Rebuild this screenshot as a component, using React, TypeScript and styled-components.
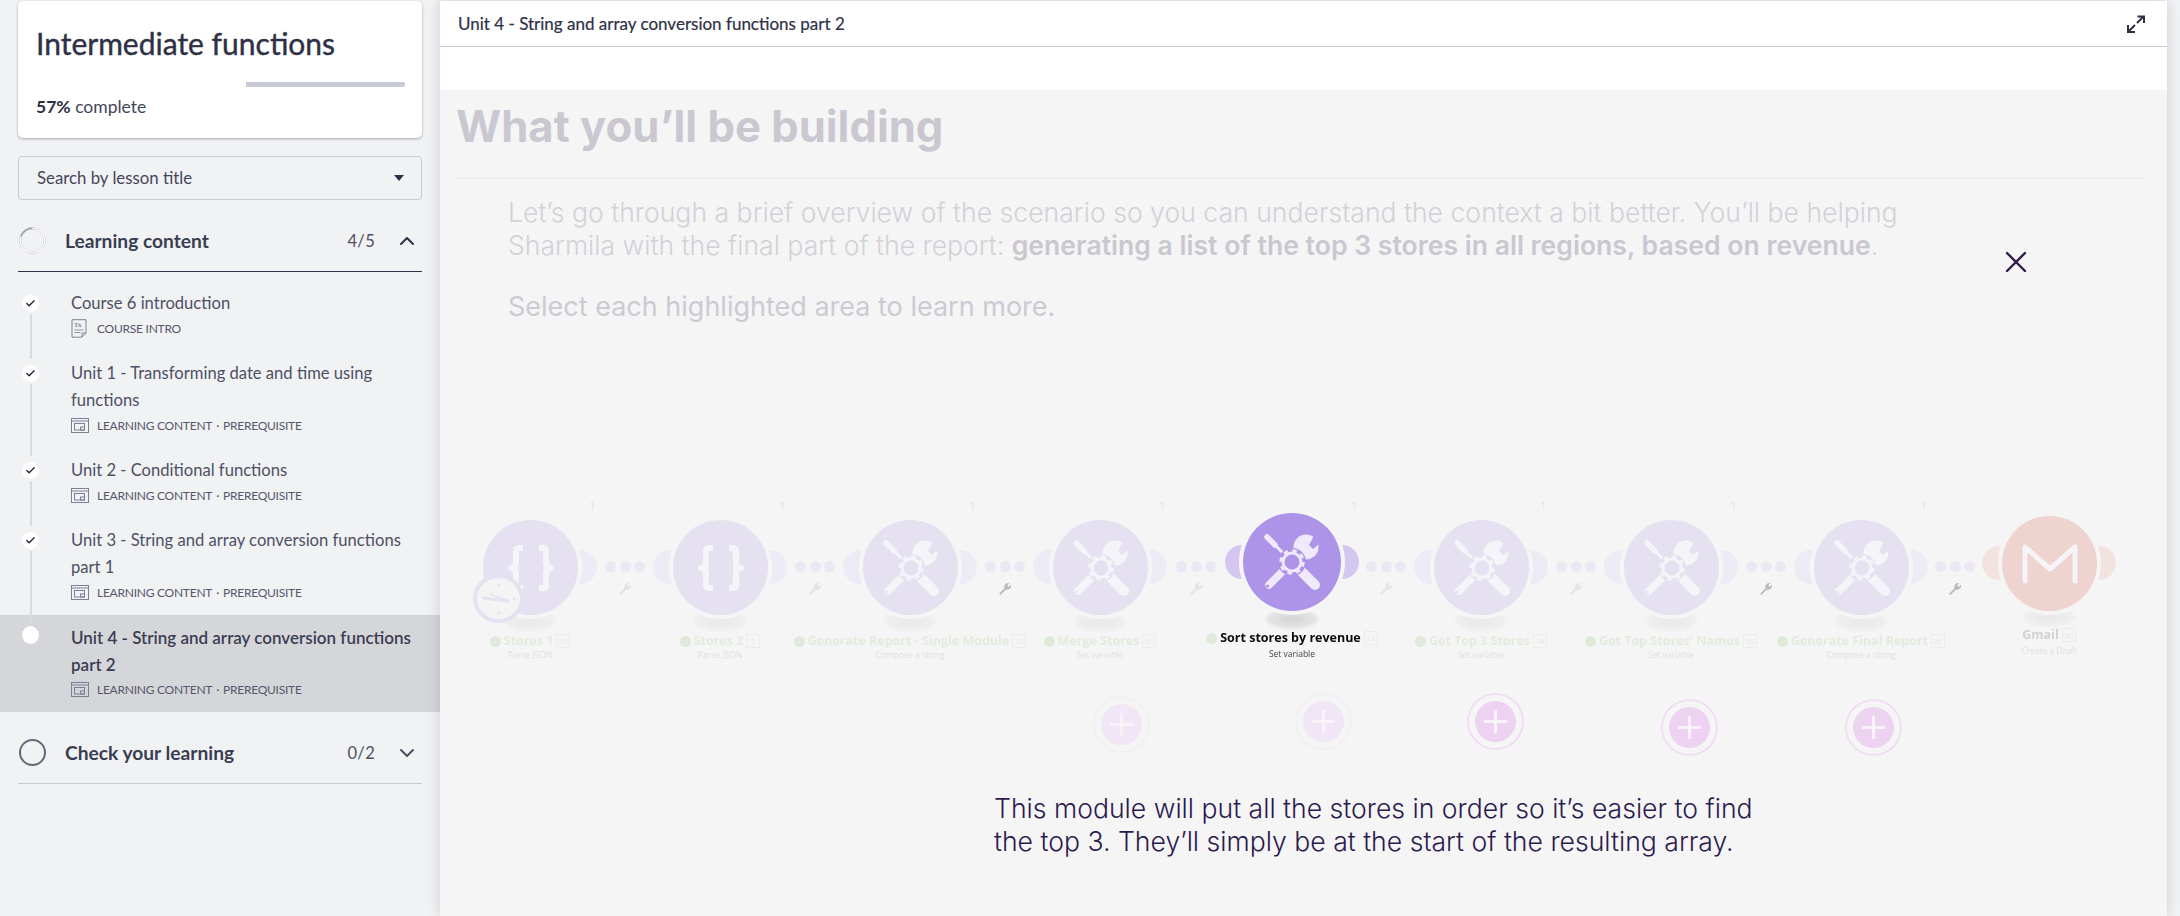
import React from 'react';
import styled, { createGlobalStyle } from 'styled-components';
import { Check, ChevronDown, ChevronUp, X } from 'lucide-react';

const sidebarFont = `Lato, "Noto Sans", sans-serif`;
const bodyFont = `Inter, "Noto Sans", sans-serif`;

const GlobalStyle = createGlobalStyle`
  html, body {
    margin: 0;
    padding: 0;
    height: 100%;
    background: #f1f2f4;
    overflow: hidden;
  }
  * {
    box-sizing: border-box;
  }
`;

type Lesson = { title: string; kind: 'intro' | 'content'; active?: boolean };

const lessons: Lesson[] = [
  { title: 'Course 6 introduction', kind: 'intro' },
  { title: 'Unit 1 - Transforming date and time using functions', kind: 'content' },
  { title: 'Unit 2 - Conditional functions', kind: 'content' },
  { title: 'Unit 3 - String and array conversion functions part 1', kind: 'content' },
  { title: 'Unit 4 - String and array conversion functions part 2', kind: 'content', active: true },
];

type Module = {
  x: number;
  name: string;
  badge: string;
  sub: string;
  icon: 'braces' | 'tools' | 'gmail';
  active?: boolean;
};

const modules: Module[] = [
  { x: 530, name: 'Stores 1', badge: '20', sub: 'Parse JSON', icon: 'braces' },
  { x: 720, name: 'Stores 2', badge: '1', sub: 'Parse JSON', icon: 'braces' },
  { x: 910, name: 'Generate Report - Single Module', badge: '28', sub: 'Compose a string', icon: 'tools' },
  { x: 1100, name: 'Merge Stores', badge: '31', sub: 'Set variable', icon: 'tools' },
  { x: 1292, name: 'Sort stores by revenue', badge: '13', sub: 'Set variable', icon: 'tools', active: true },
  { x: 1481, name: 'Get Top 3 Stores', badge: '34', sub: 'Set variable', icon: 'tools' },
  { x: 1671, name: "Get Top Stores' Names", badge: '35', sub: 'Set variable', icon: 'tools' },
  { x: 1861, name: 'Generate Final Report', badge: '36', sub: 'Compose a string', icon: 'tools' },
  { x: 2049, name: 'Gmail', badge: '30', sub: 'Create a Draft', icon: 'gmail' },
];

const links = [
  { x: 625, dark: false },
  { x: 815, dark: false },
  { x: 1005, dark: true },
  { x: 1196, dark: false },
  { x: 1386, dark: false },
  { x: 1576, dark: false },
  { x: 1766, dark: true },
  { x: 1955, dark: true },
];

const addButtons = [
  { x: 1121, y: 724, faint: true },
  { x: 1323, y: 721, faint: true },
  { x: 1495, y: 721, faint: false },
  { x: 1689, y: 727, faint: false },
  { x: 1873, y: 727, faint: false },
];

function ToolsIcon({ cut }: { cut: string }) {
  return (
    <svg width="60" height="60" viewBox="0 0 60 60" fill="none" stroke="currentColor" strokeLinecap="round">
      <path d="M5 5l8 8" strokeWidth="5.5" />
      <path d="M12 12l10 10" strokeWidth="3" />
      <path d="M38 38l15 15" strokeWidth="10" />
      <path d="M7 53l15-15" strokeWidth="7.5" />
      <circle cx="5.5" cy="54" r="1.6" fill={cut} stroke="none" />
      <path d="M35 25l-5 5" strokeWidth="7" />
      <circle cx="44" cy="15" r="12.5" fill="currentColor" stroke="none" />
      <path d="M47 13L53 2 62 8 51 17z" fill={cut} stroke="none" />
      <circle cx="30" cy="30" r="14" fill={cut} stroke="none" />
      <circle cx="30" cy="30" r="9" strokeWidth="3" />
      <circle cx="30" cy="30" r="11.5" strokeWidth="2.5" strokeDasharray="4.5 4.53" strokeLinecap="butt" />
    </svg>
  );
}

function BracesIcon() {
  return (
    <svg width="50" height="48" viewBox="0 0 50 48" fill="none" stroke="currentColor" strokeWidth="6" strokeLinejoin="round">
      <path d="M17 4h-4q-3 0-3 3v12q0 5-5 5 5 0 5 5v12q0 3 3 3h4" />
      <path d="M33 4h4q3 0 3 3v12q0 5 5 5-5 0-5 5v12q0 3-3 3h-4" />
    </svg>
  );
}

function GmailIcon() {
  return (
    <svg width="56" height="42" viewBox="0 0 56 42" fill="none" stroke="currentColor" strokeWidth="5" strokeLinecap="round" strokeLinejoin="round">
      <path d="M3 38V4l25 22L53 4v34" />
    </svg>
  );
}

function ClockIcon() {
  return (
    <svg width="42" height="42" viewBox="0 0 42 42" fill="none" stroke="#e5e1f1" strokeLinecap="round">
      <path d="M6 20l24 3" strokeWidth="3" />
      <path d="M12 16l18 7" strokeWidth="1.5" />
      <circle cx="21" cy="7" r="1.4" fill="#e5e1f1" stroke="none" />
      <circle cx="21" cy="35" r="1.4" fill="#e5e1f1" stroke="none" />
      <circle cx="36" cy="21" r="1.4" fill="#e5e1f1" stroke="none" />
    </svg>
  );
}

function SmallWrench() {
  return (
    <svg width="15" height="15" viewBox="0 0 16 16" fill="currentColor">
      <path d="M2.5 14.8L1.2 13.5 7 7.6C6 5 8 1.6 12 2.2L9.8 4.6l1.6 1.7 2.5-2.3C14.6 7.6 11.4 10 8.4 9z" />
    </svg>
  );
}

function DocIcon() {
  return (
    <svg width="16" height="19" viewBox="0 0 16 19" fill="none" stroke="#7d8092">
      <path d="M1 .7h14v13.5l-4 4H1z" />
      <path d="M11 18v-4h4" />
      <path d="M3.5 11h9M3.5 13.5h6" strokeWidth=".8" />
      <text x="3" y="8" fontSize="7" fontFamily="Liberation Serif, serif" fill="#4a4d63" stroke="none">Tx</text>
    </svg>
  );
}

function SlideIcon() {
  return (
    <svg width="18" height="15" viewBox="0 0 18 15" fill="none" stroke="#7d8092">
      <rect x=".5" y=".5" width="17" height="14" />
      <path d="M.5 3h17" />
      <rect x="3.5" y="5.5" width="10" height="6.5" />
      <rect x="9.5" y="9" width="4" height="3" />
    </svg>
  );
}

function ExpandIcon() {
  return (
    <svg width="18" height="18" viewBox="0 0 18 18" fill="none" stroke="#2e3146" strokeWidth="2">
      <path d="M10 8l6.5-6.5M10.5 1.5h6.5v6.5" />
      <path d="M8 10l-6.5 6.5M1 10v7h7" />
    </svg>
  );
}

function App() {
  return (
    <Page>
      <GlobalStyle />
      <Sidebar>
        <CourseCard>
          <CourseTitle>Intermediate functions</CourseTitle>
          <ProgressTrack>
            <ProgressBar />
          </ProgressTrack>
          <ProgressText>
            <strong>57%</strong> complete
          </ProgressText>
        </CourseCard>

        <SearchBox>
          <SearchText>Search by lesson title</SearchText>
          <Caret />
        </SearchBox>

        <SectionHeader $open>
          <svg width="27" height="27" viewBox="0 0 27 27" fill="none">
            <circle cx="13.5" cy="13.5" r="12.2" stroke="#a3a5b0" strokeWidth="2" />
            <circle
              cx="13.5"
              cy="13.5"
              r="12.2"
              stroke="#fff"
              strokeWidth="1.6"
              strokeDasharray="61 77"
              transform="rotate(-90 13.5 13.5)"
            />
          </svg>
          <SectionTitle>Learning content</SectionTitle>
          <SectionCount>4/5</SectionCount>
          <ChevronUp size={24} color="#2e3146" strokeWidth={2} />
        </SectionHeader>

        <LessonList>
          {lessons.map((lesson, i) => (
            <LessonRow key={lesson.title} $active={lesson.active} $last={i === lessons.length - 1}>
              <LessonDot $active={lesson.active}>
                {!lesson.active && <Check size={11} color="#23253a" strokeWidth={3} />}
              </LessonDot>
              <div>
                <LessonTitle $active={lesson.active}>{lesson.title}</LessonTitle>
                <LessonMeta>
                  <MetaIcon>{lesson.kind === 'intro' ? <DocIcon /> : <SlideIcon />}</MetaIcon>
                  {lesson.kind === 'intro' ? 'COURSE INTRO' : 'LEARNING CONTENT'}
                  {lesson.kind === 'content' && <MetaDot>·</MetaDot>}
                  {lesson.kind === 'content' && 'PREREQUISITE'}
                </LessonMeta>
              </div>
            </LessonRow>
          ))}
        </LessonList>

        <SectionHeader>
          <EmptyRing />
          <SectionTitle>Check your learning</SectionTitle>
          <SectionCount>0/2</SectionCount>
          <ChevronDown size={24} color="#4d5064" strokeWidth={2} />
        </SectionHeader>
      </Sidebar>

      <Main>
        <MainHeader>
          <MainTitle>Unit 4 - String and array conversion functions part 2</MainTitle>
          <ExpandIcon />
        </MainHeader>
        <WhiteBand />
        <Slide>
          <SlideTitle>What you’ll be building</SlideTitle>
          <SlideRule />
          <Intro>
            <IntroLine>
              Let’s go through a brief overview of the scenario so you can understand the context a bit better. You’ll be
              helping
            </IntroLine>
            <IntroLine>
              <span>Sharmila with the final part of the report: </span>
              <strong>generating a list of the top 3 stores in all regions, based on revenue</strong>
              <span>.</span>
            </IntroLine>
          </Intro>
          <SelectHint>Select each highlighted area to learn more.</SelectHint>
          <CloseButton>
            <X size={36} color="#2d1a4f" strokeWidth={1.6} />
          </CloseButton>

          {links.map((link) => (
            <Link key={link.x} $x={link.x}>
              <LinkDot />
              <LinkDot />
              <LinkDot />
              <LinkWrench $dark={link.dark}>
                <SmallWrench />
              </LinkWrench>
            </Link>
          ))}

          {modules.map((m) => (
            <ModuleNode key={m.name} $x={m.x} $active={m.active} $gmail={m.icon === 'gmail'}>
              {m.icon !== 'gmail' && <RunCount $active={m.active}>1</RunCount>}
              <ModuleShadow $active={m.active} />
              {m.x !== 530 && <Ear $side="left" $active={m.active} $gmail={m.icon === 'gmail'} />}
              <Ear $side="right" $active={m.active} $gmail={m.icon === 'gmail'} />
              <ModuleCircle $active={m.active} $gmail={m.icon === 'gmail'}>
                {m.icon === 'braces' && <BracesIcon />}
                {m.icon === 'tools' && <ToolsIcon cut={m.active ? '#ad94e9' : '#e5e1f1'} />}
                {m.icon === 'gmail' && <GmailIcon />}
              </ModuleCircle>
              <ModuleLabel $active={m.active} $gmail={m.icon === 'gmail'}>
                {m.icon !== 'gmail' && <StatusDot />}
                <ModuleName $active={m.active} $gmail={m.icon === 'gmail'}>
                  {m.name}
                </ModuleName>
                <ModuleBadge>{m.badge}</ModuleBadge>
              </ModuleLabel>
              <ModuleSub $active={m.active}>{m.sub}</ModuleSub>
              {m.x === 530 && (
                <ClockBadge>
                  <ClockIcon />
                </ClockBadge>
              )}
            </ModuleNode>
          ))}

          {addButtons.map((b) => (
            <AddButton key={b.x} $x={b.x} $y={b.y} $faint={b.faint} />
          ))}

          <Caption>
            <CaptionLine>This module will put all the stores in order so it’s easier to find</CaptionLine>
            <CaptionLine>the top 3. They’ll simply be at the start of the resulting array.</CaptionLine>
          </Caption>
        </Slide>
      </Main>
    </Page>
  );
}

const Page = styled.div`
  display: flex;
  width: 2180px;
  height: 916px;
  background: #f1f2f4;
  overflow: hidden;
`;

const Sidebar = styled.aside`
  width: 440px;
  flex: none;
  font-family: ${sidebarFont};
  color: #2e3146;
`;

const CourseCard = styled.div`
  margin: 1px 18px 0;
  height: 137px;
  padding: 23px 18px 0;
  background: #fff;
  border-radius: 5px;
  box-shadow: 0 1px 3px rgba(30, 32, 50, 0.35);
`;

const CourseTitle = styled.h1`
  margin: 0;
  font-size: 30px;
  line-height: 38px;
  font-weight: 400;
  -webkit-text-stroke: 0.4px #2e3146;
  color: #2e3146;
`;

const ProgressTrack = styled.div`
  margin-top: 20px;
  height: 5px;
  display: flex;
  justify-content: flex-end;
`;

const ProgressBar = styled.div`
  width: 159px;
  margin-right: -1px;
  background: #c8cad6;
  border-radius: 0 2px 2px 0;
`;

const ProgressText = styled.div`
  margin-top: 9px;
  font-size: 17.5px;
  line-height: 22px;
  color: #43465a;

  strong {
    font-weight: 700;
    color: #2e3146;
  }
`;

const SearchBox = styled.div`
  margin: 18px 18px 0;
  height: 44px;
  padding: 0 17px 2px 18px;
  display: flex;
  align-items: center;
  justify-content: space-between;
  border: 1px solid #c8cad6;
  border-radius: 4px;
`;

const SearchText = styled.span`
  font-size: 16.8px;
  color: #43465a;
`;

const Caret = styled.span`
  width: 0;
  height: 0;
  margin-top: 2px;
  border-left: 5px solid transparent;
  border-right: 5px solid transparent;
  border-top: 6px solid #2e3146;
`;

const SectionHeader = styled.div<{ $open?: boolean }>`
  margin: 10px 18px ${(p) => (p.$open ? '9px' : '0')};
  height: 62px;
  display: flex;
  align-items: center;
  padding: 0 3px 0 1px;
  border-bottom: 1px solid ${(p) => (p.$open ? '#2e3146' : '#c8cad6')};
`;

const SectionTitle = styled.div`
  flex: 1;
  margin-left: 19px;
  font-size: 19.2px;
  font-weight: 700;
  color: #3a3d52;
`;

const SectionCount = styled.div`
  margin-right: 20px;
  font-size: 16.5px;
  letter-spacing: 0.3px;
  color: #4d5064;
`;

const EmptyRing = styled.div`
  width: 27px;
  height: 27px;
  border: 2px solid #65687a;
  border-radius: 50%;
`;

const LessonList = styled.div`
  display: flex;
  flex-direction: column;
`;

const LessonRow = styled.div<{ $active?: boolean; $last?: boolean }>`
  position: relative;
  display: flex;
  gap: 32px;
  padding: 9px 18px 9px 22px;
  background: ${(p) => (p.$active ? '#d5d6da' : 'transparent')};

  &::after {
    content: ${(p) => (p.$last ? 'none' : '""')};
    position: absolute;
    left: 30px;
    top: 33px;
    bottom: -8px;
    width: 2px;
    background: #d9dae0;
    z-index: 1;
  }
`;

const LessonDot = styled.div<{ $active?: boolean }>`
  flex: none;
  width: 17px;
  height: ${(p) => (p.$active ? '18px' : '17px')};
  margin-top: ${(p) => (p.$active ? '2px' : '5px')};
  border-radius: 50%;
  background: #fff;
  display: flex;
  align-items: center;
  justify-content: center;
  position: relative;
  z-index: 2;
`;

const LessonTitle = styled.div<{ $active?: boolean }>`
  font-size: ${(p) => (p.$active ? '17px' : '16.6px')};
  line-height: 27px;
  font-weight: ${(p) => (p.$active ? 600 : 400)};
  color: ${(p) => (p.$active ? '#3a3d52' : '#4d5064')};
`;

const LessonMeta = styled.div`
  height: 23px;
  margin-bottom: 2px;
  display: flex;
  align-items: center;
  font-size: 12px;
  letter-spacing: -0.25px;
  color: #55586b;
`;

const MetaIcon = styled.span`
  width: 26px;
  display: flex;
  align-items: center;
`;

const MetaDot = styled.span`
  margin: 0 4px;
`;

const Main = styled.main`
  width: 1727px;
  flex: none;
  margin-top: 1px;
  height: 915px;
  display: flex;
  flex-direction: column;
  background: #fff;
  box-shadow: 0 0 12px rgba(30, 32, 50, 0.18);
  z-index: 3;
`;

const MainHeader = styled.header`
  height: 46px;
  flex: none;
  padding: 0 22px 0 18px;
  display: flex;
  align-items: center;
  justify-content: space-between;
  border-bottom: 1px solid #c8cad6;
`;

const MainTitle = styled.div`
  font-family: ${sidebarFont};
  font-size: 17px;
  font-weight: 400;
  -webkit-text-stroke: 0.2px #2e3146;
  color: #2e3146;
`;

const WhiteBand = styled.div`
  height: 43px;
  flex: none;
`;

const Slide = styled.section`
  position: relative;
  flex: 1;
  background: #f5f5f5;
  font-family: ${bodyFont};
  padding: 0 22px 0 16px;
  overflow: hidden;
`;

const SlideTitle = styled.h2`
  margin: 0;
  padding-top: 8px;
  font-size: 43.6px;
  line-height: 58px;
  font-weight: 700;
  color: #cbc7d1;
`;

const SlideRule = styled.div`
  margin: 21px 0 17px 2px;
  height: 2px;
  background: #eeeeee;
`;

const Intro = styled.div`
  margin: 0 0 28px 52px;
  font-size: 26.6px;
  line-height: 33px;
  font-weight: 300;
  color: #d3d1d8;

  strong {
    font-weight: 600;
    color: #cbc7d1;
  }
`;

const IntroLine = styled.div`
  white-space: nowrap;
`;

const SelectHint = styled.div`
  margin-left: 52px;
  font-size: 27px;
  line-height: 33px;
  font-weight: 400;
  color: #cdcad4;
`;

const CloseButton = styled.div`
  position: absolute;
  left: 1558px;
  top: 154px;
  display: flex;
`;

/* canvas coordinates below are page x minus the slide's left edge (440), page y minus its top (90) */
const Link = styled.div<{ $x: number }>`
  position: absolute;
  left: ${(p) => p.$x - 440 - 20}px;
  top: 471px;
  width: 40px;
  display: flex;
  justify-content: space-between;
  filter: blur(0.4px);
`;

const LinkDot = styled.span`
  width: 11px;
  height: 11px;
  border-radius: 50%;
  background: #ebe8f4;
`;

const LinkWrench = styled.span<{ $dark?: boolean }>`
  position: absolute;
  left: 13px;
  top: 20px;
  display: flex;
  color: ${(p) => (p.$dark ? '#b9b9bb' : '#e2e2e4')};
`;

const ModuleNode = styled.div<{ $x: number; $active?: boolean; $gmail?: boolean }>`
  position: absolute;
  left: ${(p) => p.$x - 440}px;
  top: ${(p) => (p.$active ? 472 : p.$gmail ? 473 : 477)}px;
  width: 0;
  height: 0;
  filter: ${(p) => (p.$active ? 'none' : 'blur(0.5px)')};
`;

const RunCount = styled.span<{ $active?: boolean }>`
  position: absolute;
  left: 60px;
  top: ${(p) => (p.$active ? -62 : -67)}px;
  font-size: 10px;
  color: #e4e4e4;
`;

const ModuleShadow = styled.div<{ $active?: boolean }>`
  position: absolute;
  left: -26px;
  top: ${(p) => (p.$active ? 47 : 44)}px;
  width: 52px;
  height: 20px;
  border-radius: 50%;
  filter: blur(1px);
  background: radial-gradient(
    ellipse at center,
    ${(p) => (p.$active ? '#d4d4d4' : '#e8e8e8')} 0%,
    ${(p) => (p.$active ? '#e6e6e6' : '#efefef')} 70%,
    #f5f5f5 100%
  );
`;

const Ear = styled.div<{ $side: 'left' | 'right'; $active?: boolean; $gmail?: boolean }>`
  position: absolute;
  ${(p) => (p.$side === 'left' ? 'right: 33px;' : 'left: 33px;')}
  top: -17px;
  width: 34px;
  height: 34px;
  border-radius: 50%;
  background: ${(p) => (p.$active ? '#d3c6f0' : p.$gmail ? '#f2e3e1' : '#eeebf6')};
`;

const ModuleCircle = styled.div<{ $active?: boolean; $gmail?: boolean }>`
  position: absolute;
  left: ${(p) => (p.$active ? -49 : -47)}px;
  top: ${(p) => (p.$active ? -49 : -47)}px;
  width: ${(p) => (p.$active ? 98 : 95)}px;
  height: ${(p) => (p.$active ? 98 : 95)}px;
  border-radius: 50%;
  display: flex;
  align-items: center;
  justify-content: center;
  color: ${(p) => (p.$active ? '#efeafb' : '#f5f4f8')};
  background: ${(p) => (p.$active ? '#ad94e9' : p.$gmail ? '#efd3cf' : '#e5e1f1')};
  box-shadow: 0 0 0 4px #f5f5f5;
`;

const ModuleLabel = styled.div<{ $active?: boolean; $gmail?: boolean }>`
  position: absolute;
  left: -200px;
  width: 400px;
  top: ${(p) => (p.$active ? 68 : p.$gmail ? 64 : 66)}px;
  display: flex;
  align-items: center;
  justify-content: center;
  gap: 3px;
  font-family: "Open Sans", sans-serif;
`;

const StatusDot = styled.span`
  width: 11px;
  height: 11px;
  border-radius: 50%;
  background: #dfeadb;
`;

const ModuleName = styled.span<{ $active?: boolean; $gmail?: boolean }>`
  font-size: 12.5px;
  line-height: 16px;
  font-weight: 700;
  color: ${(p) => (p.$active ? '#0c0c0c' : p.$gmail ? '#d2d2d4' : '#e2ecde')};
`;

const ModuleBadge = styled.span`
  min-width: 14px;
  height: 14px;
  padding: 0 1px;
  border: 1px solid #ececec;
  font-size: 8px;
  line-height: 12px;
  text-align: center;
  color: #e6e6e6;
`;

const ModuleSub = styled.div<{ $active?: boolean }>`
  position: absolute;
  left: -100px;
  width: 200px;
  top: ${(p) => (p.$active ? 86 : 82)}px;
  text-align: center;
  font-family: "Open Sans", sans-serif;
  font-size: 8.5px;
  line-height: 12px;
  color: ${(p) => (p.$active ? '#444' : '#dedede')};
`;

const ClockBadge = styled.div`
  position: absolute;
  left: -57px;
  top: 7px;
  width: 51px;
  height: 49px;
  border-radius: 50%;
  border: 4px solid #e5e1f1;
  background: #f4f4f4;
  display: flex;
  align-items: center;
  justify-content: center;
`;

const AddButton = styled.div<{ $x: number; $y: number; $faint?: boolean }>`
  position: absolute;
  left: ${(p) => p.$x - 440 - 20}px;
  top: ${(p) => p.$y - 90 - 20}px;
  width: 41px;
  height: 41px;
  border-radius: 50%;
  background: ${(p) => (p.$faint ? '#f1e6f6' : '#edd2f1')};
  box-shadow:
    0 0 0 6px #f5f5f5,
    0 0 0 8px ${(p) => (p.$faint ? '#f3eff6' : '#f1def4')},
    0 0 0 27px #f5f5f5,
    0 0 0 28px ${(p) => (p.$faint ? '#f5f5f5' : '#f3f3f3')};

  &::before,
  &::after {
    content: '';
    position: absolute;
    background: #f7f3f9;
  }

  &::before {
    left: 9px;
    right: 9px;
    top: 19px;
    height: 3px;
  }

  &::after {
    top: 9px;
    bottom: 9px;
    left: 19px;
    width: 3px;
  }
`;

const Caption = styled.div`
  position: absolute;
  left: 554px;
  top: 702px;
  font-size: 26.6px;
  line-height: 33px;
  font-weight: 300;
  color: #2d1a4f;
`;

const CaptionLine = styled.div`
  white-space: nowrap;
`;

export default App;
